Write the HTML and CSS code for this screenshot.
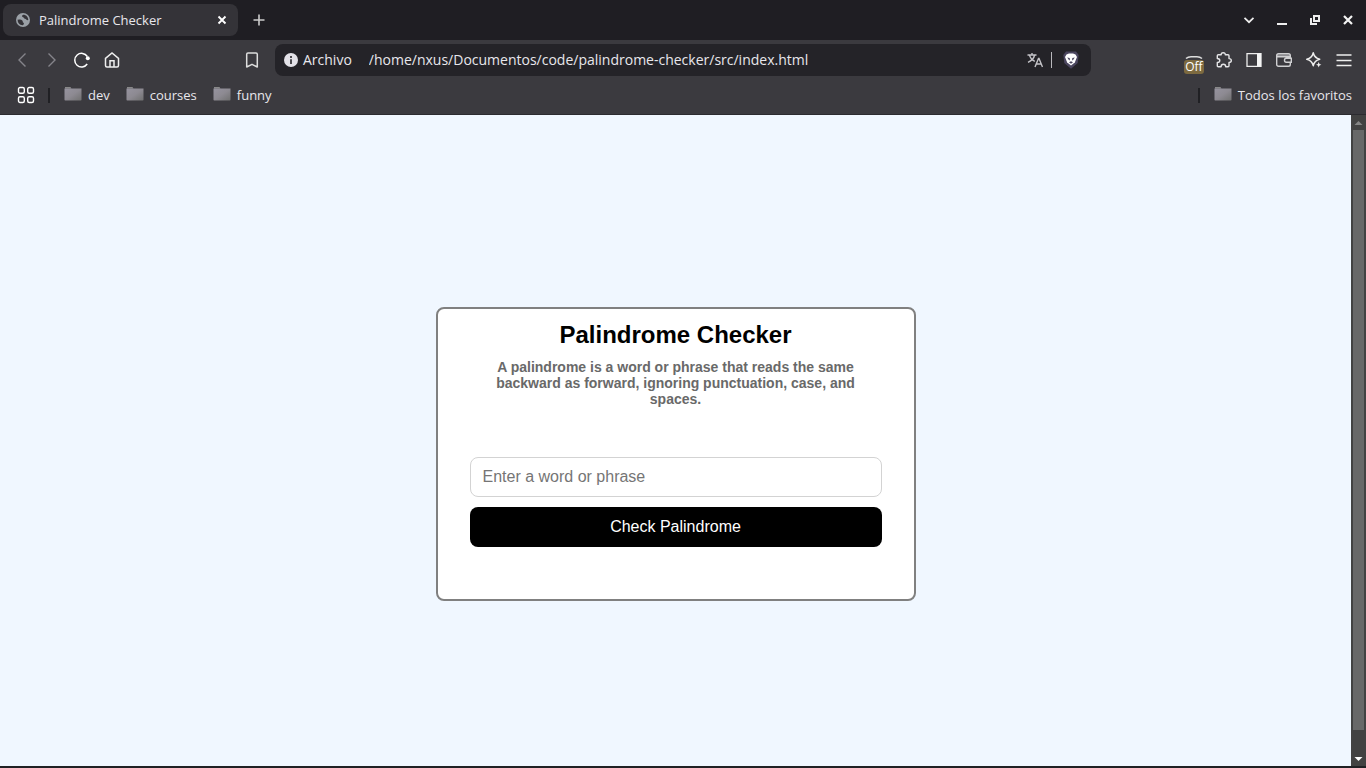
FILE: index.html
```html
<!DOCTYPE html>
<html lang="es">
<head>
<meta charset="utf-8">
<title>Palindrome Checker</title>
<link rel="stylesheet" href="styles.css">
</head>
<body>
<svg class="defs" aria-hidden="true">
  <defs>
    <linearGradient id="folder-fill" x1="0" y1="0" x2="1" y2="1"><stop offset="0" stop-color="#96939f"/><stop offset=".5" stop-color="#8d8a92"/><stop offset="1" stop-color="#707070"/></linearGradient>
    <symbol id="folder" viewBox="0 0 18 16"><path d="M1 1.500V.2h5.500l1 1.300z" fill="#a3a3a3"/><path d="M.5 1.500h17v11.200q0 .8-.8.8H1.300q-.8 0-.8-.8z" fill="url(#folder-fill)"/></symbol>
  </defs>
</svg>
<header class="browser">
  <div class="tab-strip">
    <div class="tab">
      <svg class="icon" width="16" height="16" viewBox="0 0 16 16"><circle cx="8" cy="8" r="7" fill="#9aa0a6"/><path d="M2.700 7.600c1.800.2 3.300-.4 4.600.8 1.100 1-.3 1.800 1.200 2.300 1 .5.200 1.800-.8 2.500C4.800 13.300 2.400 10.800 2.700 7.600zM8.300 2.800c-1.300.7-2 1.800-.5 2.300 1.400.3 1 1.600 2.200 1.700 1.200 0 1.500 1.700 3.300 1.300C13.300 5 11 2.800 8.300 2.800z" fill="#343338"/></svg>
      <span class="tab-title">Palindrome Checker</span>
      <button class="plain" aria-label="Cerrar pestaña"><svg width="16" height="16" viewBox="0 0 16 16"><path d="M4.500 4.500l7 7m0-7l-7 7" stroke="#fff" stroke-width="1.900"/></svg></button>
    </div>
    <button class="plain new-tab" aria-label="Nueva pestaña"><svg width="16" height="16" viewBox="0 0 16 16"><path d="M8 2.500v11M2.500 8h11" stroke="#ccc" stroke-width="1.600"/></svg></button>
    <div class="window-buttons">
      <button class="plain" aria-label="Buscar pestañas"><svg width="16" height="16" viewBox="0 0 16 16"><path d="M3.500 5.800L8 10.200l4.500-4.400" fill="none" stroke="#eee" stroke-width="1.700"/></svg></button>
      <button class="plain" aria-label="Minimizar"><svg width="16" height="16" viewBox="0 0 16 16"><path d="M3 11h10v2H3z" fill="#eee"/></svg></button>
      <button class="plain" aria-label="Restaurar"><svg width="16" height="16" viewBox="0 0 16 16"><path d="M7 4h5v5H7zM4 6v6h6" fill="none" stroke="#eee" stroke-width="2"/></svg></button>
      <button class="plain" aria-label="Cerrar"><svg width="16" height="16" viewBox="0 0 16 16"><path d="M4 4l8 8m0-8l-8 8" stroke="#f4f4f4" stroke-width="2.200"/></svg></button>
    </div>
  </div>
  <nav class="toolbar" aria-label="Navegación">
    <div class="nav-buttons">
      <button class="plain" aria-label="Atrás"><svg width="16" height="16" viewBox="0 0 16 16"><path d="M11.500 1.500L5 8l6.500 6.500" fill="none" stroke="#85848a" stroke-width="1.400"/></svg></button>
      <button class="plain" aria-label="Adelante"><svg width="16" height="16" viewBox="0 0 16 16"><path d="M4.500 1.500L11 8l-6.500 6.500" fill="none" stroke="#85848a" stroke-width="1.400"/></svg></button>
      <button class="plain" aria-label="Recargar"><svg width="16" height="16" viewBox="0 0 16 16"><path d="M13.200 12A6.800 6.800 0 1 1 13.300 4.500" fill="none" stroke="#fff" stroke-width="1.500"/><circle cx="13.800" cy="6.300" r="2" fill="#fff"/></svg></button>
      <button class="plain" aria-label="Inicio"><svg width="16" height="16" viewBox="0 0 16 16"><path d="M1.500 6.300L8 1l6.500 5.300v7.200q0 1.500-1.500 1.500H3q-1.500 0-1.500-1.500zM6 15V8.700h4V15" fill="none" stroke="#eee" stroke-width="1.500"/></svg></button>
    </div>
    <button class="plain" aria-label="Añadir a favoritos"><svg width="16" height="16" viewBox="0 0 16 16"><path d="M4 1h8q1.300 0 1.300 1.300V15L8 12.300 2.700 15V2.300Q2.700 1 4 1z" fill="none" stroke="#ddd" stroke-width="1.500" stroke-linejoin="round"/></svg></button>
    <div class="address">
      <svg class="icon" width="16" height="16" viewBox="0 0 16 16"><circle cx="8" cy="8" r="7" fill="#e3e2e8"/><path d="M7 4h2v2H7zM7 7.200h2V12H7z" fill="#4a494e"/></svg>
      <label class="scheme" for="url">Archivo</label>
      <input id="url" class="url" type="text" value="/home/nxus/Documentos/code/palindrome-checker/src/index.html">
      <button class="plain" aria-label="Traducir"><svg width="16" height="16" viewBox="0 0 16 16"><path d="M.5 3h9M5 1v2M2.500 3c.7 3 3 5.300 5.300 6.300M7.600 3C7 6 4 9 1 10.300M8 15l3.500-8.500h.5L15.500 15M9.200 12h5" fill="none" stroke="#c4c3c8" stroke-width="1.400"/></svg></button>
      <span class="address-rule"></span>
      <button class="plain" aria-label="Brave Shields"><svg width="16" height="18" viewBox="0 0 16 18"><path d="M3 .5h10l2.700 3.500-1 8L8 17.700 1.300 12 .3 4z" fill="#4b465f"/><path d="M3.500 3.500L6 2.500h4l2.500 1L14 6l-2.200 5.500L8 14.500 4.200 11.500 2 6z" fill="#fff"/><path d="M4.200 6.400l2.500.5.2 1.800-.6.800zM11.800 6.400l-2.500.5-.2 1.800.6.800zM6 11.300L8 10.300l2 1L8 12.800z" fill="#4b465f"/></svg></button>
    </div>
    <div class="actions">
      <button class="plain extension" aria-label="Extensión, Off"><svg width="20" height="16" viewBox="0 0 20 16"><path d="M2 6.500Q4 4.700 7 4.700h6q3 0 5 1.800" fill="none" stroke="#ddd" stroke-width="1.500"/></svg><span class="off-badge">Off</span></button>
      <button class="plain" aria-label="Extensiones"><svg width="16" height="16" viewBox="0 0 16 16"><path d="M2.300 2.800h2.900Q5 .7 7.200.7t2.100 2.100H12q1 0 1 1v2.800q2.300 0 2.300 1.900T13 10.400v3.300q0 1-1 1H9.700q0-2.400-2.300-2.400t-2.300 2.400H2.300q-1 0-1-1v-3.200q2.500-.2 2.500-2t-2.500-2V3.800q0-1 1-1z" fill="none" stroke="#e4e4e6" stroke-width="1.400" stroke-linejoin="round"/></svg></button>
      <button class="plain" aria-label="Barra lateral"><svg width="16" height="16" viewBox="0 0 16 16"><path d="M1 1.700h14v12.600H1z" fill="none" stroke="#eee" stroke-width="1.300"/><path d="M11 1.500h4v13h-4z" fill="#f4f4f4"/></svg></button>
      <button class="plain" aria-label="Cartera"><svg width="16" height="16" viewBox="0 0 16 16"><path d="M1 2.500h13v2H1z" fill="#8f8e93"/><rect x=".7" y="1.700" width="13.600" height="12.600" rx="1.800" fill="none" stroke="#d0d0d2" stroke-width="1.400"/><path d="M1 4.700h13M15.300 6.200h-5q-1.800 0-1.800 2t1.800 2h5z" fill="#3b3a3f" stroke="#d0d0d2" stroke-width="1.400"/></svg></button>
      <button class="plain" aria-label="Leo"><svg width="16" height="16" viewBox="0 0 16 16"><path d="M7.200.8Q8.500 6 13.700 7.300 8.500 8.500 7.200 13.700 6 8.500.8 7.300 6 6 7.200.8z" fill="none" stroke="#eee" stroke-width="1.500" stroke-linejoin="round"/><path d="M12.700 10l.8 1.900 1.900.8-1.900.8-.8 1.900-.8-1.900-1.900-.8 1.900-.8z" fill="#eee"/></svg></button>
      <button class="plain" aria-label="Menú"><svg width="16" height="16" viewBox="0 0 16 16"><path d="M.5 3h15M.5 8.500h15M.5 13.500h15" stroke="#eee" stroke-width="1.300"/></svg></button>
    </div>
  </nav>
  <nav class="bookmarks" aria-label="Favoritos">
    <button class="plain" aria-label="Aplicaciones"><svg width="18" height="18" viewBox="0 0 18 18"><g fill="none" stroke="#fff" stroke-width="1.400"><rect x="1.500" y="1.500" width="5.800" height="5.800" rx="1.500"/><rect x="10.700" y="1.500" width="5.800" height="5.800" rx="1.500"/><rect x="1.500" y="10.700" width="5.800" height="5.800" rx="1.500"/><rect x="10.700" y="10.700" width="5.800" height="5.800" rx="1.500"/></g></svg></button>
    <span class="bookmark-rule"></span>
    <div class="folders">
      <button class="plain folder"><svg width="18" height="16"><use href="#folder"/></svg>dev</button>
      <button class="plain folder"><svg width="18" height="16"><use href="#folder"/></svg>courses</button>
      <button class="plain folder"><svg width="18" height="16"><use href="#folder"/></svg>funny</button>
    </div>
    <span class="bookmark-rule"></span>
    <button class="plain folder"><svg width="18" height="16"><use href="#folder"/></svg>Todos los favoritos</button>
  </nav>
</header>
<div class="viewport">
  <main class="page">
    <form class="card">
      <h1 class="title">Palindrome Checker</h1>
      <p class="description" id="description">A palindrome is a word or phrase that reads the same backward as forward, ignoring punctuation, case, and spaces.</p>
      <input class="text-input" type="text" placeholder="Enter a word or phrase" aria-label="Enter a word or phrase" aria-describedby="description">
      <button class="check-button" type="button">Check Palindrome</button>
    </form>
  </main>
  <div class="scrollbar" aria-hidden="true">
    <svg width="15" height="15" viewBox="0 0 15 15"><path d="M3.500 10L7.500 6l4 4z" fill="#858585"/></svg>
    <div class="thumb"></div>
    <svg width="15" height="15" viewBox="0 0 15 15"><path d="M3.500 6L7.500 10l4-4z" fill="#fff"/></svg>
  </div>
</div>
</body>
</html>
```
FILE: styles.css
```css
* {
  box-sizing: border-box;
}

body {
  margin: 0;
  min-height: 100vh;
  display: flex;
  flex-direction: column;
  background: #202124;
  font-family: "Liberation Sans", Arial, sans-serif;
}

.defs {
  position: absolute;
  width: 0;
  height: 0;
}

svg {
  display: block;
  flex: none;
}

.browser {
  background: #3b3a3f;
  border-bottom: 1px solid #2c2b30;
  color: #e8e7ec;
  font: 13px/20px "Open Sans", "Noto Sans", sans-serif;
}

.plain {
  display: flex;
  align-items: center;
  padding: 0;
  border: 0;
  background: none;
  color: inherit;
  font: inherit;
}

.tab-strip {
  display: flex;
  align-items: center;
  height: 40px;
  padding: 0 10px 0 3px;
  background: #1f1e23;
}

.tab {
  display: flex;
  align-items: center;
  gap: 8px;
  width: 235px;
  height: 32px;
  padding: 0 8px 0 12px;
  border-radius: 8px;
  background: #343338;
}

.tab-title {
  flex: 1;
}

.new-tab {
  margin-left: 13px;
}

.window-buttons {
  display: flex;
  gap: 17px;
  margin-left: auto;
}

.toolbar {
  display: flex;
  align-items: center;
  height: 40px;
  padding: 0 14px;
}

.nav-buttons {
  display: flex;
  gap: 14px;
  margin-right: auto;
}

.address {
  display: flex;
  align-items: center;
  flex: 0 1 816px;
  height: 32px;
  margin-left: 15px;
  padding: 0 12px 0 8px;
  border-radius: 8px;
  background: #242328;
  font-size: 14px;
}

.scheme {
  margin: 0 17px 0 4px;
}

.url {
  flex: 1;
  min-width: 0;
  padding: 0;
  border: 0;
  background: none;
  color: inherit;
  font: inherit;
}

.address-rule {
  width: 1px;
  height: 16px;
  margin: 0 11px 0 8px;
  background: #b9b8bd;
}

.actions {
  display: flex;
  align-items: center;
  gap: 14px;
  margin-left: 93px;
}

.extension {
  position: relative;
  margin-right: -2px;
}

.off-badge {
  position: absolute;
  top: 8px;
  left: 0;
  width: 20px;
  height: 14px;
  border-radius: 3px;
  background: #7d6a40;
  color: #fff;
  font-size: 12px;
  line-height: 14px;
  text-align: center;
}

.bookmarks {
  display: flex;
  align-items: center;
  height: 34px;
  padding: 0 14px 4px 17px;
}

.bookmark-rule {
  width: 2px;
  height: 15px;
  margin: 0 14px 0 13px;
  background: #202024;
}

.folders {
  display: flex;
  gap: 16px;
  margin-right: auto;
}

.folder {
  gap: 6px;
}

.viewport {
  flex: 1;
  display: flex;
  margin-bottom: 2px;
}

.page {
  flex: 1;
  display: flex;
  align-items: center;
  justify-content: center;
  padding: 27px 16px 0;
  background: #f0f7ff;
}

.card {
  display: flex;
  flex-direction: column;
  width: 480px;
  padding: 12px 32px 52px;
  border: 2px solid #808080;
  border-radius: 8px;
  background: #fff;
}

.title {
  margin: 0 0 10px;
  font-size: 24px;
  line-height: 28px;
  text-align: center;
}

.description {
  align-self: center;
  max-width: 380px;
  margin: 0 0 50px;
  color: #696969;
  font-size: 14px;
  font-weight: bold;
  line-height: 16px;
  text-align: center;
}

.text-input,
.check-button {
  width: 100%;
  height: 40px;
  padding: 0 12px;
  border-radius: 8px;
  font: 16px/20px "Liberation Sans", Arial, sans-serif;
}

.text-input {
  margin-bottom: 10px;
  border: 1px solid #d3d3d3;
  background: #fff;
}

.check-button {
  border: 0;
  background: #000;
  color: #fff;
}

.scrollbar {
  display: flex;
  flex-direction: column;
  width: 15px;
  background: #424242;
}

.thumb {
  flex: 1;
  margin: 0 2px 21px;
  background: #686868;
}
```
